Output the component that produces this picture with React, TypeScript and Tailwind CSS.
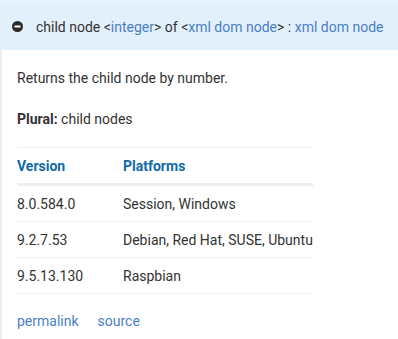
import React from "react";

export default function App() {
  const rows = [
    ["8.0.584.0", "Session, Windows"],
    ["9.2.7.53", "Debian, Red Hat, SUSE, Ubuntu"],
    ["9.5.13.130", "Raspbian"],
  ];
  return (
    <div className="w-[398px] h-[339px] bg-white overflow-hidden text-[14px] text-[#333333]" style={{ fontFamily: "Roboto, 'Liberation Sans', sans-serif" }}>
      <div className="h-[3px] bg-[#e8f3fc]" />
      <div className="h-[47px] bg-[#e2f0fb] flex items-center pl-[12px]">
        <svg width="11" height="11" viewBox="0 0 11 11" className="shrink-0">
          <circle cx="5.5" cy="5.5" r="5.5" fill="#2b2b2b" />
          <rect x="2.5" y="4.5" width="6" height="2" fill="#ffffff" />
        </svg>
        <div className="ml-[13px] whitespace-nowrap leading-5">
          child node &lt;<span className="text-[#4a7fc4]">integer</span>&gt; of &lt;<span className="text-[#4a7fc4]">xml dom node</span>&gt; : <span className="text-[#4a7fc4]">xml dom node</span>
        </div>
      </div>
      <div className="border-l-2 border-[#eeeeee] pl-[15px] pt-[18px] h-[289px]">
        <p className="leading-5">Returns the child node by number.</p>
        <p className="leading-5 mt-[21px]"><b className="font-bold">Plural:</b> child nodes</p>
        <div className="w-[296px] overflow-hidden mt-[18px]">
          <div className="border-t border-[#eeeeee]">
            <div className="flex h-[35px] pt-[2px] items-center font-bold text-[#0f6aa9] whitespace-nowrap">
              <div className="w-[106px] shrink-0">Version</div>
              <div>Platforms</div>
            </div>
            <div className="h-[3px] bg-[#eeeeee]" />
            {rows.map((r) => (
              <div key={r[0]} className="flex h-[36px] pt-[2px] items-center border-b border-[#eeeeee] whitespace-nowrap">
                <div className="w-[106px] shrink-0">{r[0]}</div>
                <div>{r[1]}</div>
              </div>
            ))}
          </div>
        </div>
        <div className="flex gap-[19px] mt-[17px] text-[#4a7fc4] leading-5">
          <span>permalink</span>
          <span>source</span>
        </div>
      </div>
    </div>
  );
}
